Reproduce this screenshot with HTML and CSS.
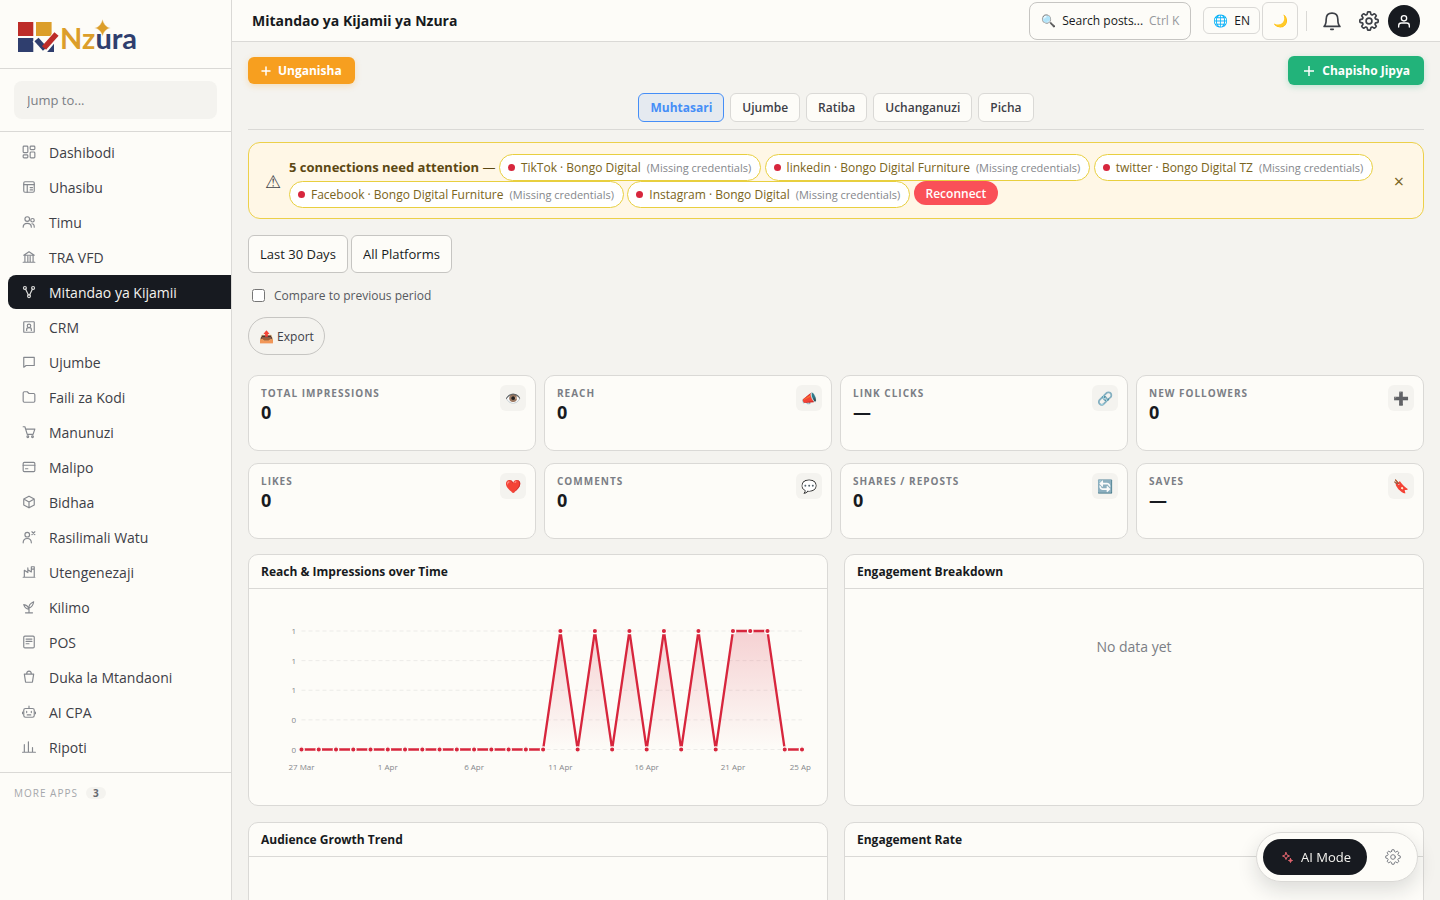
FILE: index.html
```html
<!DOCTYPE html>
<html lang="sw">
<head>
    <meta charset="UTF-8">
    <meta name="viewport" content="width=device-width, initial-scale=1.0">
    <title>Mitandao ya Kijamii ya Nzura</title>
    <link rel="stylesheet" href="styles.css">
</head>
<body>
    <div class="app">
        <aside class="sidebar">
            <a href="#" class="brand" aria-label="Nzura">
                <svg class="brand-logo" viewBox="0 0 120 34" width="120" height="34">
                    <rect x="0" y="3" width="15.300" height="14" fill="#bd2c28"/>
                    <rect x="18" y="3" width="15.600" height="14" fill="#dc9e2a"/>
                    <rect x="0" y="19" width="15.300" height="14" fill="#2f3e6e"/>
                    <path d="M36 23V33H27Z" fill="#2f3e6e"/>
                    <path d="M17.500 20L26.500 30L39 15" fill="none" stroke="#fdfcf8" stroke-width="8"/>
                    <path d="M18.500 20.500L27 30" fill="none" stroke="#2f3e6e" stroke-width="5.600"/>
                    <path d="M26 29L38.500 15" fill="none" stroke="#bd2c28" stroke-width="5.600"/>
                    <text x="42" y="30" class="brand-text"><tspan fill="#dc9e2a">Nz</tspan><tspan fill="#2f3e6e">ura</tspan></text>
                    <path d="M84.500 0Q86 7.500 92.500 9Q86 10.500 84.500 17.500Q83 10.500 76.500 9Q83 7.500 84.500 0Z" fill="#dc9e2a" stroke="#fdfcf8" stroke-width=".5"/>
                </svg>
            </a>
            <div class="jump">
                <input type="text" class="jump-input" placeholder="Jump to..." aria-label="Jump to">
            </div>
            <nav class="nav">
                <a href="#" class="nav-item"><svg class="icon" viewBox="0 0 24 24"><rect x="2" y="2" width="8" height="11" rx="1.500"/><rect x="14" y="2" width="8" height="6" rx="1.500"/><rect x="14" y="12" width="8" height="10" rx="1.500"/><rect x="2" y="17" width="8" height="5" rx="1.500"/></svg>Dashibodi</a>
                <a href="#" class="nav-item"><svg class="icon" viewBox="0 0 24 24"><rect x="3" y="3" width="18" height="18" rx="2"/><path d="M3 8H21M9 8V21M14 13H18M14 17H18"/></svg>Uhasibu</a>
                <a href="#" class="nav-item"><svg class="icon" viewBox="0 0 24 24"><circle cx="9" cy="7" r="4"/><circle cx="18" cy="9" r="3"/><path d="M2 21C2 12 16 12 16 21M17 15C20 15 21 18 21 21"/></svg>Timu</a>
                <a href="#" class="nav-item"><svg class="icon" viewBox="0 0 24 24"><path d="M2 21H22M3 9L12 3L21 9ZM5 10V20M10 11V20M14 11V20M19 10V20"/></svg>TRA VFD</a>
                <a href="#" class="nav-item active"><svg class="icon" viewBox="0 0 24 24"><circle cx="5" cy="5" r="2.500"/><circle cx="19" cy="5" r="2.500"/><circle cx="12" cy="19" r="2.500"/><path d="M6 7L11 17M18 7L13 17"/></svg>Mitandao ya Kijamii</a>
                <a href="#" class="nav-item"><svg class="icon" viewBox="0 0 24 24"><rect x="3" y="3" width="18" height="18" rx="1"/><circle cx="12" cy="10" r="3"/><path d="M8 18V16C8 12 16 12 16 16V18"/></svg>CRM</a>
                <a href="#" class="nav-item"><svg class="icon" viewBox="0 0 24 24"><path d="M3 4H21V18H7L3 21Z"/></svg>Ujumbe</a>
                <a href="#" class="nav-item"><svg class="icon" viewBox="0 0 24 24"><path d="M4 3H9L12 6H20Q22 6 22 8V19Q22 21 20 21H4Q2 21 2 19V5Q2 3 4 3Z"/></svg>Faili za Kodi</a>
                <a href="#" class="nav-item"><svg class="icon" viewBox="0 0 24 24"><path d="M2 3H5L9 16H19L22 7H6"/><circle cx="10" cy="20" r="1.500"/><circle cx="18" cy="20" r="1.500"/></svg>Manunuzi</a>
                <a href="#" class="nav-item"><svg class="icon" viewBox="0 0 24 24"><rect x="2" y="4" width="20" height="16" rx="2"/><path d="M2 9H22M6 15H10"/></svg>Malipo</a>
                <a href="#" class="nav-item"><svg class="icon" viewBox="0 0 24 24"><path d="M12 2L21 7V17L12 22L3 17V7ZM3 7L12 12L21 7M12 12V22"/></svg>Bidhaa</a>
                <a href="#" class="nav-item"><svg class="icon" viewBox="0 0 24 24"><circle cx="9" cy="8" r="4"/><path d="M2 22C2 12 16 12 16 22M17 3L22 8M22 3L17 8"/></svg>Rasilimali Watu</a>
                <a href="#" class="nav-item"><svg class="icon" viewBox="0 0 24 24"><path d="M2 21H22M4 21V9L10 13V8L16 12V3H21V21M10 5V9M17 7H20"/></svg>Utengenezaji</a>
                <a href="#" class="nav-item"><svg class="icon" viewBox="0 0 24 24"><path d="M6 22H18M12 22V11M12 14Q11 7 20 3Q19 11 12 14ZM12 16Q10 9 3 8Q5 15 12 16Z"/></svg>Kilimo</a>
                <a href="#" class="nav-item"><svg class="icon" viewBox="0 0 24 24"><rect x="3" y="2" width="18" height="20" rx="2"/><path d="M7 7H17M7 11H17M7 15H12"/></svg>POS</a>
                <a href="#" class="nav-item"><svg class="icon" viewBox="0 0 24 24"><path d="M4 7H20L18 20Q18 21 16 21H8Q6 21 6 20ZM8 7Q8 2 12 2Q16 2 16 7"/></svg>Duka la Mtandaoni</a>
                <a href="#" class="nav-item"><svg class="icon" viewBox="0 0 24 24"><rect x="3" y="6" width="18" height="15" rx="3"/><path d="M12 2V6M1 12V15M23 12V15M9 17H15M8 11V13M16 11V13"/></svg>AI CPA</a>
                <a href="#" class="nav-item"><svg class="icon" viewBox="0 0 24 24"><path d="M1 21H23M4 21V8M11 21V3M18 21V13"/></svg>Ripoti</a>
            </nav>
            <div class="more-apps">More apps <span class="more-count">3</span></div>
        </aside>

        <div class="page">
            <header class="topbar">
                <h1 class="page-title">Mitandao ya Kijamii ya Nzura</h1>
                <button class="search-btn">🔍<span>Search posts...</span><kbd>Ctrl K</kbd></button>
                <div class="lang-group">
                    <button class="lang-btn">🌐<span>EN</span></button>
                    <button class="theme-btn" aria-label="Theme">🌙</button>
                </div>
                <div class="divider"></div>
                <button class="icon-btn" aria-label="Notifications"><svg class="icon-lg" viewBox="0 0 24 24"><path d="M2.500 18.500H21.500C19 16.500 19 14 19 10C19 5 16 2.500 12 2.500C8 2.500 5 5 5 10C5 14 5 16.500 2.500 18.500ZM10.500 22H13.500"/></svg></button>
                <button class="icon-btn" aria-label="Settings"><svg class="icon-lg" viewBox="0 0 24 24"><circle cx="12" cy="12" r="3.500"/><path class="gear" d=""/></svg></button>
                <button class="avatar" aria-label="Account"><svg class="icon-lg" viewBox="0 0 24 24"><circle cx="12" cy="8" r="4"/><path d="M4 21V19Q4 15 8 15H16Q20 15 20 19V21"/></svg></button>
            </header>

            <main class="content">
                <div class="actions">
                    <button class="btn btn-connect"><svg class="plus" viewBox="0 0 10 10"><path d="M5 1V9M1 5H9"/></svg>Unganisha</button>
                    <button class="btn btn-post"><svg class="plus" viewBox="0 0 10 10"><path d="M5 0V10M0 5H10"/></svg>Chapisho Jipya</button>
                </div>
                <div class="tabs">
                    <button class="tab active">Muhtasari</button>
                    <button class="tab">Ujumbe</button>
                    <button class="tab">Ratiba</button>
                    <button class="tab">Uchanganuzi</button>
                    <button class="tab">Picha</button>
                </div>

                <div class="alert">
                    <span class="alert-icon">⚠</span>
                    <div class="alert-body">
                        <strong>5 connections need attention</strong> —
                        <span class="chip"><i class="dot"></i>TikTok · Bongo Digital <small>(Missing credentials)</small></span>
                        <span class="chip"><i class="dot"></i>linkedin · Bongo Digital Furniture <small>(Missing credentials)</small></span>
                        <span class="chip"><i class="dot"></i>twitter · Bongo Digital TZ <small>(Missing credentials)</small></span>
                        <span class="chip"><i class="dot"></i>Facebook · Bongo Digital Furniture <small>(Missing credentials)</small></span>
                        <span class="chip"><i class="dot"></i>Instagram · Bongo Digital <small>(Missing credentials)</small></span>
                        <button class="reconnect">Reconnect</button>
                    </div>
                    <button class="alert-close" aria-label="Close">×</button>
                </div>

                <div class="filters">
                    <select class="filter" aria-label="Period"><option>Last 30 Days</option></select>
                    <select class="filter" aria-label="Platform"><option>All Platforms</option></select>
                </div>
                <label class="compare"><input type="checkbox">Compare to previous period</label>
                <button class="export">📤 Export</button>

                <section class="kpis">
                    <div class="kpi"><div><div class="kpi-label">Total Impressions</div><div class="kpi-value">0</div></div><span class="kpi-icon">👁️</span></div>
                    <div class="kpi"><div><div class="kpi-label">Reach</div><div class="kpi-value">0</div></div><span class="kpi-icon">📣</span></div>
                    <div class="kpi"><div><div class="kpi-label">Link Clicks</div><div class="kpi-value">—</div></div><span class="kpi-icon">🔗</span></div>
                    <div class="kpi"><div><div class="kpi-label">New Followers</div><div class="kpi-value">0</div></div><span class="kpi-icon">➕</span></div>
                    <div class="kpi"><div><div class="kpi-label">Likes</div><div class="kpi-value">0</div></div><span class="kpi-icon">❤️</span></div>
                    <div class="kpi"><div><div class="kpi-label">Comments</div><div class="kpi-value">0</div></div><span class="kpi-icon">💬</span></div>
                    <div class="kpi"><div><div class="kpi-label">Shares / Reposts</div><div class="kpi-value">0</div></div><span class="kpi-icon">🔄</span></div>
                    <div class="kpi"><div><div class="kpi-label">Saves</div><div class="kpi-value">—</div></div><span class="kpi-icon">🔖</span></div>
                </section>

                <section class="charts">
                    <div class="card">
                        <h2 class="card-title">Reach &amp; Impressions over Time</h2>
                        <div class="card-body">
                            <svg class="line-chart" id="reach-chart" viewBox="0 0 546 192">
                                <defs>
                                    <linearGradient id="fade" x1="0" y1="0" x2="0" y2="1">
                                        <stop offset="0" stop-color="#d7263d" stop-opacity=".2"/>
                                        <stop offset="1" stop-color="#d7263d" stop-opacity="0"/>
                                    </linearGradient>
                                </defs>
                            </svg>
                        </div>
                    </div>
                    <div class="card">
                        <h2 class="card-title">Engagement Breakdown</h2>
                        <div class="card-body"><p class="empty">No data yet</p></div>
                    </div>
                    <div class="card">
                        <h2 class="card-title">Audience Growth Trend</h2>
                        <div class="card-body"></div>
                    </div>
                    <div class="card">
                        <h2 class="card-title">Engagement Rate</h2>
                        <div class="card-body"></div>
                    </div>
                </section>
            </main>
        </div>
    </div>

    <div class="ai-dock">
        <button class="ai-btn"><svg class="sparkle" viewBox="0 0 24 24"><path d="M10 3L12 8L17 10L12 12L10 17L8 12L3 10L8 8Z"/><path d="M19 15L20 18L23 19L20 20L19 23L18 20L15 19L18 18Z" fill="currentColor"/></svg>AI Mode</button>
        <button class="ai-settings" aria-label="AI settings"><svg class="icon-md" viewBox="0 0 24 24"><circle cx="12" cy="12" r="3.500"/><path class="gear" d=""/></svg></button>
    </div>

    <script>
        // Gear outline: eight rounded teeth around the centre
        let gear = '';
        for (let i = 0; i < 8; i++) {
            const point = (r, offset) => {
                const a = (i * 45 + offset) * Math.PI / 180;
                return (12 + r * Math.sin(a)).toFixed(2) + ' ' + (12 - r * Math.cos(a)).toFixed(2);
            };
            gear += (i ? 'L' : 'M') + point(8.5, -15) + 'L' + point(10.8, -9) + 'Q' + point(11.4, 0) + ' ' + point(10.8, 9) + 'L' + point(8.5, 15) + 'Q' + point(7.6, 22.5) + ' ' + point(8.5, 30);
        }
        document.querySelectorAll('.gear').forEach(p => p.setAttribute('d', gear + 'Z'));

        // Reach chart, one value per day
        const values = [0, 0, 0, 0, 0, 0, 0, 0, 0, 0, 0, 0, 0, 0, 0, 1, 0, 1, 0, 1, 0, 1, 0, 1, 0, 1, 1, 1, 0, 0];
        const days = { 0: '27 Mar', 5: '1 Apr', 10: '6 Apr', 15: '11 Apr', 20: '16 Apr', 25: '21 Apr', 29: '25 Apr' };
        const left = 36.5, right = 537, high = 30, low = 148.5;
        const x = i => left + i * (right - left) / (values.length - 1);
        const y = v => low - v * (low - high);
        let out = '';

        [1, 0.75, 0.5, 0.25, 0].forEach(v => {
            out += `<line class="grid-line" x1="${left}" x2="${right}" y1="${y(v)}" y2="${y(v)}"/>`;
            out += `<text class="axis" x="31" y="${y(v) + 3}" text-anchor="end">${v >= 0.5 ? 1 : 0}</text>`;
        });

        const line = values.map((v, i) => `${x(i)} ${y(v)}`).join('L');
        out += `<path class="area" d="M${line}L${right} ${low}L${left} ${low}Z"/>`;
        out += `<path class="series" d="M${line}"/>`;
        values.forEach((v, i) => {
            out += `<circle class="point" cx="${x(i)}" cy="${y(v)}" r="2.7"/>`;
        });
        for (const i in days) {
            out += `<text class="axis" x="${x(i)}" y="169" text-anchor="middle">${days[i]}</text>`;
        }
        document.getElementById('reach-chart').insertAdjacentHTML('beforeend', out);
    </script>
</body>
</html>
```
FILE: styles.css
```css
:root {
    --bg: #f4f3ef;
    --surface: #fdfcf8;
    --border: #dad9d6;
    --border-strong: #c6c5c2;
    --ink: #171a20;
    --text: #3d4047;
    --muted: #7b7e85;
    --red: #d7263d;
}

* {
    box-sizing: border-box;
}

body {
    margin: 0;
    background: var(--bg);
    color: var(--ink);
    font-family: "Open Sans", sans-serif;
    font-size: 13px;
}

button,
input,
select {
    font-family: inherit;
    color: inherit;
}

button {
    cursor: pointer;
}

svg {
    flex: none;
    fill: none;
    stroke: currentColor;
    stroke-linecap: round;
    stroke-linejoin: round;
}

.app {
    display: flex;
    height: 100vh;
}

/* Sidebar */
.sidebar {
    flex: none;
    width: 232px;
    background: var(--surface);
    border-right: 1px solid var(--border);
    overflow: hidden;
}

.brand {
    display: block;
    padding: 19px 18px 15px;
    height: 69px;
    border-bottom: 1px solid var(--border);
}

.brand-logo {
    display: block;
    overflow: visible;
    stroke: none;
    stroke-linecap: butt;
    stroke-linejoin: miter;
}

.brand-text {
    font-family: Lato, sans-serif;
    font-size: 29px;
    font-weight: 700;
}

.jump {
    padding: 12px 14px;
    border-bottom: 1px solid var(--border);
}

.jump-input {
    display: block;
    width: 100%;
    height: 38px;
    padding: 0 13px;
    border: 0;
    border-radius: 8px;
    background: var(--bg);
    font-size: 13px;
}

.jump-input::placeholder {
    color: var(--muted);
}

.nav {
    display: flex;
    flex-direction: column;
    gap: 1px;
    padding: 3px 0 8px 8px;
    border-bottom: 1px solid var(--border);
}

.nav-item {
    display: flex;
    align-items: center;
    gap: 13px;
    height: 34px;
    padding-left: 14px;
    border-radius: 8px 0 0 8px;
    color: var(--text);
    font-size: 14px;
    font-weight: 500;
    text-decoration: none;
}

.nav-item.active {
    background: var(--ink);
    color: #f4f3ef;
}

.icon {
    width: 14px;
    height: 14px;
    stroke: #85888e;
    stroke-width: 2;
}

.active .icon {
    stroke: #dddddb;
}

.more-apps {
    display: flex;
    align-items: center;
    gap: 8px;
    padding: 14px;
    color: #a5a7ab;
    font-size: 10px;
    line-height: 12px;
    letter-spacing: 1px;
    text-transform: uppercase;
}

.more-count {
    padding: 0 6px 0 7px;
    border-radius: 6px;
    background: var(--bg);
    color: #666970;
    font-size: 10px;
    font-weight: 700;
}

/* Top bar */
.page {
    flex: 1;
    min-width: 0;
    display: flex;
    flex-direction: column;
}

.topbar {
    flex: none;
    display: flex;
    align-items: center;
    height: 42px;
    padding: 0 20px;
    background: var(--surface);
    border-bottom: 1px solid var(--border);
}

.page-title {
    flex: 1;
    margin: 0;
    font-size: 14px;
    font-weight: 700;
}

.search-btn {
    display: flex;
    align-items: center;
    gap: 6px;
    height: 38px;
    padding: 0 11px;
    border: 1px solid var(--border-strong);
    border-radius: 8px;
    background: var(--surface);
    font-size: 12px;
}

.search-btn kbd {
    color: #96989c;
    font-family: inherit;
}

.lang-group {
    display: flex;
    align-items: center;
    gap: 2px;
    margin-left: 12px;
}

.lang-btn,
.theme-btn {
    border: 1px solid var(--border);
    border-radius: 6px;
    background: var(--surface);
    font-size: 12px;
    font-weight: 500;
}

.lang-btn {
    display: flex;
    align-items: center;
    gap: 6px;
    height: 27px;
    padding: 0 9px;
}

.theme-btn {
    width: 36px;
    height: 38px;
    padding: 0;
}

.divider {
    width: 1px;
    height: 20px;
    margin: 0 6px 0 8px;
    background: var(--border);
}

.icon-btn {
    display: grid;
    place-items: center;
    width: 37px;
    height: 32px;
    padding: 0;
    border: 0;
    background: none;
    color: var(--text);
}

.icon-lg {
    width: 20px;
    height: 20px;
    stroke-width: 2;
}

.avatar {
    display: grid;
    place-items: center;
    width: 32px;
    height: 32px;
    margin-left: 1px;
    padding: 0;
    border: 0;
    border-radius: 50%;
    background: var(--ink);
    color: #fff;
}

.avatar .icon-lg {
    width: 16px;
    height: 16px;
}

/* Content */
.content {
    flex: 1;
    min-height: 0;
    padding: 14px 16px;
    overflow-y: auto;
    scrollbar-width: none;
}

.actions {
    display: flex;
    align-items: center;
    justify-content: space-between;
}

.btn {
    display: flex;
    align-items: center;
    gap: 7px;
    border: 0;
    border-radius: 6px;
    color: #fff;
    font-size: 12px;
    font-weight: 700;
}

.btn-connect {
    height: 27px;
    padding: 0 13px;
    background: #f79f1f;
    box-shadow: 0 2px 6px rgba(247, 159, 31, .25);
}

.btn-post {
    height: 29px;
    padding: 0 14px 0 16px;
    gap: 8px;
    background: #22b37a;
    box-shadow: 0 2px 6px rgba(34, 179, 122, .25);
}

.plus {
    width: 10px;
    height: 10px;
    stroke-width: 1.5;
}

.tabs {
    display: flex;
    justify-content: center;
    gap: 6px;
    padding: 8px 0 7px;
    border-bottom: 1px solid var(--border);
}

.tab {
    height: 29px;
    padding: 0 11px;
    border: 1px solid var(--border);
    border-radius: 6px;
    background: var(--surface);
    color: var(--text);
    font-size: 12px;
    font-weight: 600;
}

.tab.active {
    border-color: #458ef7;
    background: #e5eaf0;
    color: #458ef7;
    font-weight: 700;
}

.alert {
    display: flex;
    align-items: center;
    gap: 8px;
    margin-top: 12px;
    padding: 11px 16px 10px;
    border: 1px solid #ecd04a;
    border-radius: 12px;
    background: #fff7e6;
    color: #5c4813;
}

.alert-icon {
    color: #3d4047;
    font-size: 18px;
}

.alert-body {
    flex: 1;
    line-height: 27px;
}

.chip {
    display: inline-flex;
    align-items: center;
    gap: 6px;
    height: 27px;
    padding: 0 9px 0 8px;
    border: 1px solid #e8cf3f;
    border-radius: 14px;
    background: #fff;
    color: #7a6420;
    font-size: 12px;
    vertical-align: top;
}

.chip small {
    color: #85878c;
    font-size: 11px;
}

.dot {
    width: 7px;
    height: 7px;
    border-radius: 50%;
    background: var(--red);
}

.reconnect {
    height: 24px;
    padding: 0 12px;
    border: 0;
    border-radius: 12px;
    background: #fa5058;
    color: #fff;
    font-size: 12px;
    font-weight: 600;
    vertical-align: top;
}

.alert-close {
    padding: 0 3px;
    border: 0;
    background: none;
    color: #7a6420;
    font-size: 18px;
}

.filters {
    display: flex;
    gap: 3px;
    margin-top: 16px;
}

.filter {
    height: 38px;
    padding: 0 11px;
    border: 1px solid var(--border-strong);
    border-radius: 6px;
    background: var(--surface);
    font-size: 13px;
    appearance: none;
}

.compare {
    display: flex;
    align-items: center;
    gap: 9px;
    height: 18px;
    margin: 13px 0;
    padding-left: 4px;
    color: #565960;
    font-size: 12px;
}

.compare input {
    margin: 0;
}

.export {
    display: block;
    height: 38px;
    padding: 0 10px;
    border: 1px solid var(--border-strong);
    border-radius: 19px;
    background: var(--bg);
    color: var(--text);
    font-size: 12px;
}

.kpis {
    display: grid;
    grid-template-columns: repeat(4, 1fr);
    gap: 12px 8px;
    margin-top: 20px;
}

.kpi {
    display: flex;
    justify-content: space-between;
    min-height: 76px;
    padding: 9px 9px 9px 12px;
    border: 1px solid var(--border);
    border-radius: 10px;
    background: var(--surface);
}

.kpi-label {
    padding-top: 1px;
    color: var(--muted);
    font-size: 10px;
    font-weight: 700;
    line-height: 15px;
    letter-spacing: 1px;
    text-transform: uppercase;
}

.kpi-value {
    font-size: 18px;
    font-weight: 700;
    line-height: 22px;
}

.kpi-icon {
    display: grid;
    place-items: center;
    width: 26px;
    height: 26px;
    border-radius: 6px;
    background: var(--bg);
    font-size: 13px;
}

.charts {
    display: grid;
    grid-template-columns: repeat(2, 1fr);
    gap: 16px;
    margin-top: 15px;
}

.card {
    min-height: 252px;
    border: 1px solid var(--border);
    border-radius: 10px;
    background: var(--surface);
}

.card-title {
    margin: 0;
    padding: 0 12px;
    border-bottom: 1px solid var(--border);
    font-size: 12px;
    font-weight: 700;
    line-height: 33px;
}

.card-body {
    padding: 12px 16px;
}

.empty {
    margin: 36px 0;
    color: var(--muted);
    font-size: 14px;
    line-height: 20px;
    text-align: center;
}

.line-chart {
    display: block;
    width: 100%;
    overflow: hidden;
}

.grid-line {
    stroke: #ecebe8;
    stroke-dasharray: 4 3;
    stroke-linecap: butt;
}

.axis {
    fill: #85878c;
    stroke: none;
    font-size: 8px;
}

.area {
    fill: url(#fade);
    stroke: none;
}

.series {
    stroke: var(--red);
    stroke-width: 2.3;
}

.point {
    fill: var(--red);
    stroke: var(--surface);
    stroke-width: 1.3;
}

/* Floating AI switch */
.ai-dock {
    position: fixed;
    right: 22px;
    bottom: 18px;
    display: flex;
    align-items: center;
    gap: 8px;
    padding: 6px;
    border: 1px solid var(--border);
    border-radius: 25px;
    background: var(--surface);
    box-shadow: 0 8px 20px rgba(23, 26, 32, .14);
}

.ai-btn {
    display: flex;
    align-items: center;
    gap: 8px;
    height: 36px;
    padding: 0 16px 0 18px;
    border: 0;
    border-radius: 18px;
    background: var(--ink);
    color: #f4f3ef;
    font-size: 13px;
    font-weight: 500;
}

.sparkle {
    width: 12px;
    height: 12px;
    color: #e0646e;
    stroke-width: 2;
}

.ai-settings {
    display: grid;
    place-items: center;
    width: 36px;
    height: 36px;
    padding: 0;
    border: 0;
    background: none;
    color: var(--muted);
}

.icon-md {
    width: 16px;
    height: 16px;
    stroke-width: 1.5;
}
```
